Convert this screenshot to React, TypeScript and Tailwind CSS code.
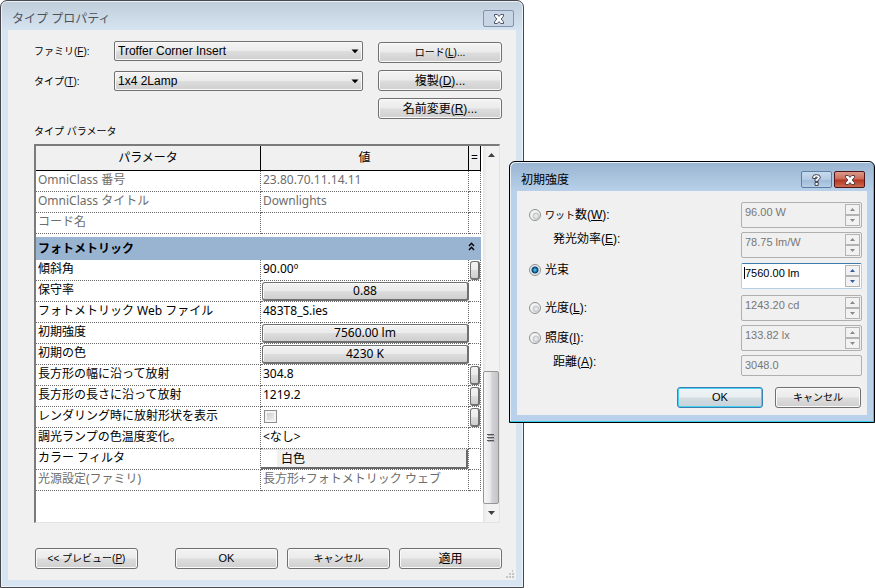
import React, { useState } from 'react';
import clsx from 'clsx';

type Row = {
  name: string;
  value: string;
  kind?: 'text' | 'button' | 'check' | 'color';
  readOnly?: boolean;
  link?: boolean;
};

const identityRows: Row[] = [
  { name: 'OmniClass 番号', value: '23.80.70.11.14.11', readOnly: true },
  { name: 'OmniClass タイトル', value: 'Downlights', readOnly: true },
  { name: 'コード名', value: '', readOnly: true },
];

const photometricRows: Row[] = [
  { name: '傾斜角', value: '90.00º', link: true },
  { name: '保守率', value: '0.88', kind: 'button' },
  { name: 'フォトメトリック Web ファイル', value: '483T8_S.ies' },
  { name: '初期強度', value: '7560.00 lm', kind: 'button' },
  { name: '初期の色', value: '4230 K', kind: 'button' },
  { name: '長方形の幅に沿って放射', value: '304.8', link: true },
  { name: '長方形の長さに沿って放射', value: '1219.2', link: true },
  { name: 'レンダリング時に放射形状を表示', value: '', kind: 'check', link: true },
  { name: '調光ランプの色温度変化。', value: '<なし>' },
  { name: 'カラー フィルタ', value: '白色', kind: 'color' },
  { name: '光源設定(ファミリ)', value: '長方形+フォトメトリック ウェブ', readOnly: true },
];

const face = 'bg-[linear-gradient(#f3f3f3,#ebebeb_48%,#dddddd_52%,#cfcfcf)]';

const PushButton = ({ children, size = 'text-[12px]', primary, className }: any) => (
  <button
    className={clsx(
      'h-[21px] rounded-[3px] border text-black leading-none whitespace-nowrap',
      primary
        ? 'border-[#3c7fb1] bg-[linear-gradient(#f0f4f6,#e8eef1_48%,#d3dde2_52%,#c6d3d9)] shadow-[inset_0_0_0_1px_#48d1f2]'
        : 'border-[#707070] shadow-[inset_0_0_0_1px_#fafafa] ' + face,
      size,
      className
    )}
  >
    {children}
  </button>
);

const DropDown = ({ id, value }: { id: string; value: string }) => (
  <div className="relative flex-1">
    <select
      id={id}
      defaultValue={value}
      className={clsx('block w-full h-5 appearance-none rounded-[2px] border border-[#707070] pl-[3px] text-[12px] leading-none text-black shadow-[inset_0_0_0_1px_#fafafa]', face)}
    >
      <option>{value}</option>
    </select>
    <svg className="absolute right-1 top-2 pointer-events-none" width="8" height="5" viewBox="0 0 8 5">
      <path d="M0.5 0.5h7L4 4.2z" fill="#000" />
    </svg>
  </div>
);

const CloseGlyph = ({ stroke }: { stroke: string }) => (
  <svg width="12" height="10" viewBox="0 0 12 10">
    <path d="M1.5 0.5h2.8L6 2.4 7.7 0.5h2.8V2.2L8.2 5l2.3 2.8v1.7H7.7L6 7.6 4.3 9.5H1.5V7.8L3.8 5 1.5 2.2z" fill="#fff" stroke={stroke} />
  </svg>
);

const ValueCell = ({ row }: { row: Row }) => {
  if (row.kind === 'button') {
    return (
      <button className={clsx('block w-full h-[19px] mt-px ml-px rounded-[3px] border border-r-2 border-b-2 border-[#707070] text-center leading-4 shadow-[inset_1px_1px_0_#fafafa]', face)}>
        {row.value}
      </button>
    );
  }
  if (row.kind === 'check') {
    return (
      <input
        type="checkbox"
        aria-label={row.name}
        className="block appearance-none w-[13px] h-[13px] ml-[3px] mt-[3px] border border-[#8e8f8f] bg-[linear-gradient(135deg,#c4c8cf,#f6f6f6)] shadow-[inset_0_0_0_2px_#f4f4f4]"
      />
    );
  }
  if (row.kind === 'color') {
    return (
      <button className="flex w-full h-5 border-t border-r-2 border-b-2 border-t-[#e3e3e3] border-r-[#696969] border-b-[#696969] bg-[#f0f0f0] text-left leading-[17px]">
        <span className="w-4 h-full bg-white" />
        <span className="pl-1">{row.value}</span>
      </button>
    );
  }
  return <span className="block pl-0.5">{row.value}</span>;
};

const ParameterRow = ({ row }: { row: Row }) => (
  <tr className={row.readOnly ? 'text-[#6d6d6d]' : 'text-black'}>
    <th scope="row" className="h-[21px] p-0 pl-0.5 text-left align-top font-normal border-b border-r border-dotted border-[#696969] whitespace-nowrap">
      {row.name}
    </th>
    <td className="h-[21px] p-0 align-top border-b border-r border-dotted border-[#696969] whitespace-nowrap">
      <ValueCell row={row} />
    </td>
    <td className="h-[21px] p-0 align-top border-b border-r border-dotted border-[#696969]">
      {row.link && (
        <button
          aria-label={`${row.name} の関連付け`}
          className={clsx('block w-2.5 h-[19px] mt-px ml-px rounded-[3px] border border-r-2 border-b-2 border-[#707070]', face)}
        />
      )}
    </td>
  </tr>
);

const ParameterTable = () => (
  <div className="flex mt-1 mr-0.5 border-t-2 border-l-2 border-r border-b border-t-[#7b7b7b] border-l-[#7b7b7b] border-r-[#e3e3e3] border-b-[#e3e3e3] bg-white">
    <div className="flex-1 pb-[31px]">
      <table className="w-full table-fixed border-separate border-spacing-0 font-['Noto_Sans','Noto_Sans_CJK_JP',sans-serif] text-[12px] leading-[18px]">
        <colgroup>
          <col className="w-[225px]" />
          <col />
          <col className="w-3" />
        </colgroup>
        <thead className="bg-[#f0f0f0]">
          <tr>
            <th className="h-[25px] p-0 font-normal border-b border-r border-black">パラメータ</th>
            <th className="h-[25px] p-0 font-normal border-b border-r border-black">値</th>
            <th className="h-[25px] p-0 font-normal border-b border-r border-black">=</th>
          </tr>
        </thead>
        <tbody>
          {identityRows.map(row => <ParameterRow key={row.name} row={row} />)}
          <tr><td colSpan={3} className="h-[3px] p-0" /></tr>
          <tr className="bg-[#99b4d1]">
            <th colSpan={3} scope="colgroup" className="h-[23px] p-0 text-left">
              <div className="flex items-center justify-between pl-0.5 pr-1.5">
                フォトメトリック
                <button aria-label="折りたたむ" className="pb-1">
                  <svg width="7" height="9" viewBox="0 0 7 9" fill="none" stroke="#000" strokeWidth="1.4">
                    <path d="M1 4L3.5 1.3 6 4M1 8L3.5 5.3 6 8" />
                  </svg>
                </button>
              </div>
            </th>
          </tr>
          {photometricRows.map(row => <ParameterRow key={row.name} row={row} />)}
        </tbody>
      </table>
    </div>

    {/* Scroll bar */}
    <div className="flex flex-col w-4 ml-0.5 bg-[linear-gradient(90deg,#e6e6e6,#f2f2f2_25%,#f2f2f2)]">
      <button aria-label="上へ" className="flex items-center justify-center h-[18px]">
        <svg width="7" height="4" viewBox="0 0 7 4"><path d="M0 4h7L3.5 0z" fill="#404040" /></svg>
      </button>
      <div className="flex items-center justify-center h-[133px] mt-auto rounded-[2px] border border-[#979797] bg-[linear-gradient(90deg,#f5f5f5,#e9e9eb_45%,#d5d5d9_55%,#c4c4c8)]">
        <svg width="8" height="8" viewBox="0 0 8 8">
          <path d="M0 .5h7M0 3.5h7M0 6.5h7" stroke="#555" />
          <path d="M1 1.5h7M1 4.5h7M1 7.5h7" stroke="#aaa" />
        </svg>
      </div>
      <button aria-label="下へ" className="flex items-center justify-center h-[18px]">
        <svg width="7" height="4" viewBox="0 0 7 4"><path d="M0 0h7L3.5 4z" fill="#404040" /></svg>
      </button>
    </div>
  </div>
);

const TypeProperties = () => (
  <section className="w-full max-w-[524px] rounded-t-[7px] border border-[#47474b] bg-[linear-gradient(#bfcddb,#d7e4f2_30px)] px-[7px] pb-[7px] shadow-[inset_0_0_0_1px_#eaf2fa]">
    <header className="flex items-center justify-between h-[29px] pl-1 pr-0.5 pt-1.5">
      <h1 className="text-[12px] leading-4 text-[#4c535c]">タイプ プロパティ</h1>
      <button aria-label="閉じる" className="flex items-center justify-center w-[31px] h-[17px] rounded-[2px] border border-[#8591ae] bg-[#c7d5e4]">
        <CloseGlyph stroke="#505468" />
      </button>
    </header>

    <div className="relative bg-[#f0f0f0] pl-[26px] pr-[14px] pt-[11px] pb-[11px]">
      <div className="flex gap-[15px]">
        <div className="flex-1 flex flex-col gap-2.5">
          <div className="flex items-center">
            <label htmlFor="family" className="w-20 text-[10px]">ファミリ(<u>F</u>):</label>
            <DropDown id="family" value="Troffer Corner Insert" />
          </div>
          <div className="flex items-center">
            <label htmlFor="type" className="w-20 text-[10px]">タイプ(<u>T</u>):</label>
            <DropDown id="type" value="1x4 2Lamp" />
          </div>
        </div>
        <div className="flex flex-col gap-[7px] w-[124px] pt-px">
          <PushButton size="text-[10px]">ロード(<u>L</u>)...</PushButton>
          <PushButton>複製(<u>D</u>)...</PushButton>
          <PushButton>名前変更(<u>R</u>)...</PushButton>
        </div>
      </div>

      <h2 className="mt-[5px] text-[10px] leading-4">タイプ パラメータ</h2>
      <ParameterTable />

      <div className="flex gap-[9px] mt-[25px] pl-px">
        <PushButton size="text-[10px]" className="w-[103px] mr-auto">&lt;&lt; プレビュー(<u>P</u>)</PushButton>
        <PushButton size="text-[11px]" className="w-[103px]">OK</PushButton>
        <PushButton size="text-[10px]" className="w-[103px]">キャンセル</PushButton>
        <PushButton className="w-[103px]">適用</PushButton>
      </div>

      <svg className="absolute right-0.5 bottom-px" width="9" height="9" viewBox="0 0 9 9" fill="#c4c4c4">
        <path d="M7 0h1v2H7zM7 3h2v2H7zM7 6h2v2H7zM4 3h2v2H4zM4 6h2v2H4zM1 6h2v2H1z" />
      </svg>
    </div>
  </section>
);

const SpinField = ({ id, value, active, spin = true }: { id: string; value: string; active?: boolean; spin?: boolean }) => (
  <div
    className={clsx(
      'relative flex w-[121px] rounded-[2px] border p-px',
      spin ? 'h-[26px]' : 'h-[21px]',
      active ? 'bg-white border-[#b5cfe7] border-t-[#3d7bad]' : 'bg-[#f0f0f0] border-[#afafaf]'
    )}
  >
    <input
      id={id}
      defaultValue={value}
      disabled={!active}
      className={clsx('min-w-0 flex-1 h-4 pl-0.5 bg-transparent text-[11px]', active ? 'text-black' : 'text-[#777777]')}
    />
    {active && <span className="absolute left-[2px] top-[3px] w-px h-3 bg-black" />}
    {spin && (
      <div className="flex flex-col w-[15px]">
        {['増やす', '減らす'].map((label, i) => (
          <button
            key={label}
            aria-label={label}
            disabled={!active}
            className="flex flex-1 items-center justify-center border border-[#b4b4b4] bg-[#f2f2f2]"
          >
            <svg width="5" height="3" viewBox="0 0 5 3">
              <path d={i === 0 ? 'M0 3h5L2.5 0z' : 'M0 0h5L2.5 3z'} fill={active ? '#3c56a8' : '#8a8a8a'} />
            </svg>
          </button>
        ))}
      </div>
    )}
  </div>
);

const InitialIntensity = () => {
  const [mode, setMode] = useState('flux');

  const radio = (name: string) => (
    <input
      type="radio"
      id={name}
      name="mode"
      checked={mode === name}
      onChange={() => setMode(name)}
      className="appearance-none w-3 h-3 mr-1 rounded-full border border-[#8e8f8f] bg-[radial-gradient(circle_at_60%_60%,#f4f4f4_0px,#c4c8cc_3px,#f4f4f4_4px)] checked:bg-[radial-gradient(circle,#6fd0f5_0px,#1573a8_2px,#0b3a63_3px,#e8eef2_4px)]"
    />
  );

  return (
    <section className="absolute right-0 top-[161px] w-[366px] rounded-t-[6px] border border-black bg-[linear-gradient(#99b4d1,#b9d1ea_30px)] px-[7px] pb-[7px] shadow-[inset_-1px_-1px_0_#35cbe8,inset_1px_1px_0_#e4effa]">
      <header className="flex items-center h-[29px] pl-1 pr-0.5 pt-1.5">
        <h1 className="flex-1 text-[12px] leading-4 text-black">初期強度</h1>
        <button aria-label="ヘルプ" className="flex items-center justify-center w-[31px] h-[17px] mr-0.5 rounded-[2px] border border-[#5d7ea3] bg-[linear-gradient(#c8dbee,#b2cae3_50%,#9fbad6_51%,#b6cee6)]">
          <svg width="9" height="12" viewBox="0 0 9 12">
            <path
              d="M.7 4.5V3Q.7.6 4.5.6T8.3 3.2Q8.3 5 6.2 6V7.4H3V5.2L5.2 3.9V3.1H3.6V4.5zM3 8.4h3.2v3H3z"
              fill="#fff"
              stroke="#3f4353"
            />
          </svg>
        </button>
        <button aria-label="閉じる" className="flex items-center justify-center w-[31px] h-[17px] rounded-[2px] border border-[#4f1519] bg-[linear-gradient(#dc9a8b,#cb6a57_48%,#b23420_52%,#cc6a4c)]">
          <CloseGlyph stroke="#50424b" />
        </button>
      </header>

      <div className="bg-[#f0f0f0] pl-3 pr-[5px] pt-[11px] pb-[7px] text-[12px] leading-[14px]">
        <div className="flex flex-col gap-1">
          <div className="flex items-center justify-between">
            <div className="flex items-center">{radio('watt')}<label htmlFor="watt"><span className="text-[10px]">ワット</span>数(<u>W</u>):</label></div>
            <SpinField id="wattValue" value="96.00 W" />
          </div>
          <div className="flex items-start justify-between">
            <label htmlFor="efficacy" className="pl-6">発光効率(<u>E</u>):</label>
            <SpinField id="efficacy" value="78.75 lm/W" />
          </div>
        </div>
        <div className="flex items-start justify-between mt-[5px]">
          <div className="flex items-center">{radio('flux')}<label htmlFor="flux">光束</label></div>
          <SpinField id="fluxValue" value="7560.00 lm" active />
        </div>
        <div className="flex flex-col gap-1 mt-1.5">
          <div className="flex items-center justify-between">
            <div className="flex items-center">{radio('candela')}<label htmlFor="candela">光度(<u>L</u>):</label></div>
            <SpinField id="candelaValue" value="1243.20 cd" />
          </div>
          <div className="flex items-center justify-between">
            <div className="flex items-center">{radio('lux')}<label htmlFor="lux">照度(<u>I</u>):</label></div>
            <SpinField id="luxValue" value="133.82 lx" />
          </div>
          <div className="flex items-start justify-between">
            <label htmlFor="distance" className="pl-6">距離(<u>A</u>):</label>
            <SpinField id="distance" value="3048.0" spin={false} />
          </div>
        </div>
        <div className="flex justify-end gap-3 mt-[11px] pr-px">
          <PushButton primary size="text-[11px]" className="w-[86px]">OK</PushButton>
          <PushButton size="text-[10px]" className="w-[86px]">キャンセル</PushButton>
        </div>
      </div>
    </section>
  );
};

export default function App() {
  return (
    <main className="relative min-h-screen bg-white text-black font-['Liberation_Sans','Noto_Sans_CJK_JP',sans-serif]">
      <TypeProperties />
      <InitialIntensity />
    </main>
  );
}
